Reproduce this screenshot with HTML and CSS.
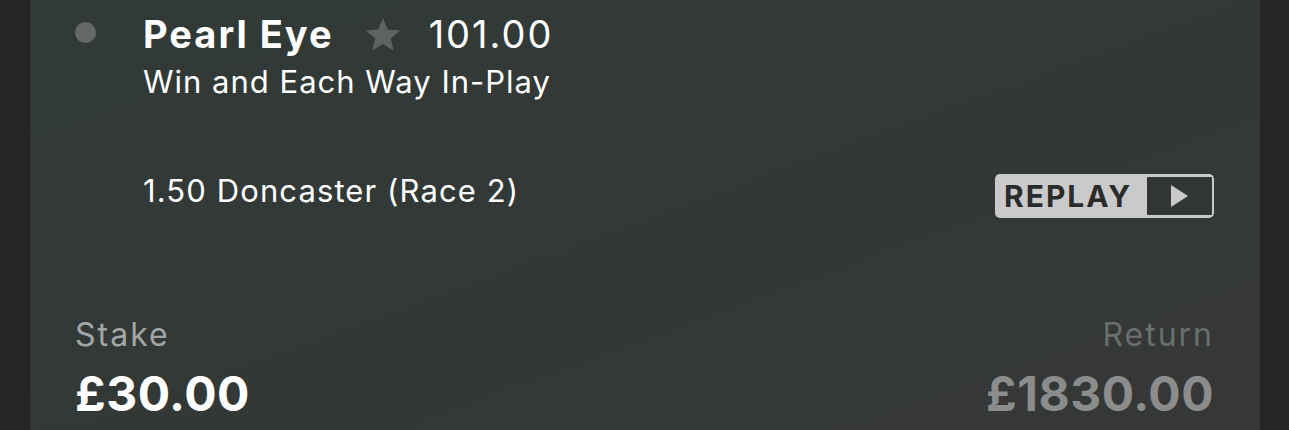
FILE: index.html
```html
<!DOCTYPE html>
<html lang="en">
<head>
<meta charset="utf-8">
<title>Bet receipt</title>
<link rel="stylesheet" href="styles.css">
</head>
<body>
<main class="bet-card">
  <section class="selection">
    <span class="status-dot"></span>
    <div class="selection-info">
      <div class="selection-title">
        <span class="runner">Pearl Eye</span>
        <svg class="fav-star" viewBox="0 0 24 23" aria-hidden="true"><path d="M12 .5L15.17 8.13 23.41 8.79 17.14 14.17 19.05 22.21 12 17.9 4.95 22.21 6.86 14.17 .59 8.79 8.83 8.13Z"/></svg>
        <span class="odds">101.00</span>
      </div>
      <div class="market">Win and Each Way In-Play</div>
    </div>
  </section>
  <section class="event-row">
    <span class="event">1.50 Doncaster (Race 2)</span>
    <button class="replay" type="button">
      <span class="replay-label">REPLAY</span>
      <span class="replay-play"><svg viewBox="0 0 17 22" aria-hidden="true"><path d="M0 0L17 11 0 22Z"/></svg></span>
    </button>
  </section>
  <section class="totals">
    <div class="total">
      <span class="total-label">Stake</span>
      <span class="total-value">£30.00</span>
    </div>
    <div class="total total-return">
      <span class="total-label">Return</span>
      <span class="total-value">£1830.00</span>
    </div>
  </section>
</main>
</body>
</html>
```
FILE: styles.css
```css
html, body {
  margin: 0;
  height: 100%;
  background: #252525;
  overflow: hidden;
}

body {
  font-family: Inter, "Noto Sans", sans-serif;
  color: #ffffff;
}

.bet-card {
  margin-left: 30px;
  width: 1230px;
  height: 430px;
  box-sizing: border-box;
  padding: 0 46px 0 45px;
  background: linear-gradient(160deg, #313a38 0%, #333836 60%, #363837 100%);
}

/* runner, star, odds and market */
.selection {
  display: flex;
  align-items: flex-start;
  gap: 47px;
  padding-top: 11px;
}

.status-dot {
  width: 21px;
  height: 21px;
  border-radius: 50%;
  background: #666767;
  margin-top: 11px;
  flex: none;
}

.selection-title {
  display: flex;
  align-items: center;
  height: 46px;
}

.runner {
  font-size: 38px;
  line-height: 46px;
  font-weight: 700;
  letter-spacing: 2px;
}

.fav-star {
  width: 36px;
  height: 35px;
  fill: #5d6360;
  margin: 0 28px 0 31px;
}

.odds {
  font-size: 38px;
  line-height: 46px;
  font-weight: 400;
  letter-spacing: 2px;
}

.market {
  font-size: 31px;
  line-height: 38px;
  letter-spacing: 1px;
  margin-top: 6px;
}

/* event name and replay button */
.event-row {
  display: flex;
  justify-content: space-between;
  align-items: flex-start;
  padding-left: 68px;
  margin-top: 71px;
}

.event {
  font-size: 31px;
  line-height: 38px;
  letter-spacing: 1.1px;
}

.replay {
  display: flex;
  align-items: stretch;
  height: 44px;
  width: 219px;
  margin-top: 2px;
  box-sizing: border-box;
  padding: 3px 2px 3px 0;
  border: 0;
  border-radius: 5px;
  background: #cacaca;
  font: inherit;
  cursor: pointer;
}

.replay-label {
  flex: 1;
  display: flex;
  align-items: center;
  padding-left: 9px;
  font-size: 30px;
  font-weight: 700;
  letter-spacing: 2px;
  color: #2a2c2b;
}

.replay-play {
  width: 65px;
  display: flex;
  align-items: center;
  justify-content: center;
  background: #323635;
  border-radius: 1px;
}

.replay-play svg {
  width: 17px;
  height: 22px;
  fill: #cacaca;
}

/* stake and return */
.totals {
  display: flex;
  justify-content: space-between;
  margin-top: 98px;
}

.total {
  display: flex;
  flex-direction: column;
}

.total-return {
  align-items: flex-end;
}

.total-label {
  font-size: 32px;
  line-height: 38px;
  letter-spacing: 2px;
  color: #a3a6a5;
}

.total-value {
  font-size: 48px;
  font-weight: 700;
  line-height: 56px;
  letter-spacing: 0.5px;
  margin-top: 12px;
}

.total-return .total-label {
  color: #6a6e6c;
}

.total-return .total-value {
  color: #8b8c8b;
}
```
